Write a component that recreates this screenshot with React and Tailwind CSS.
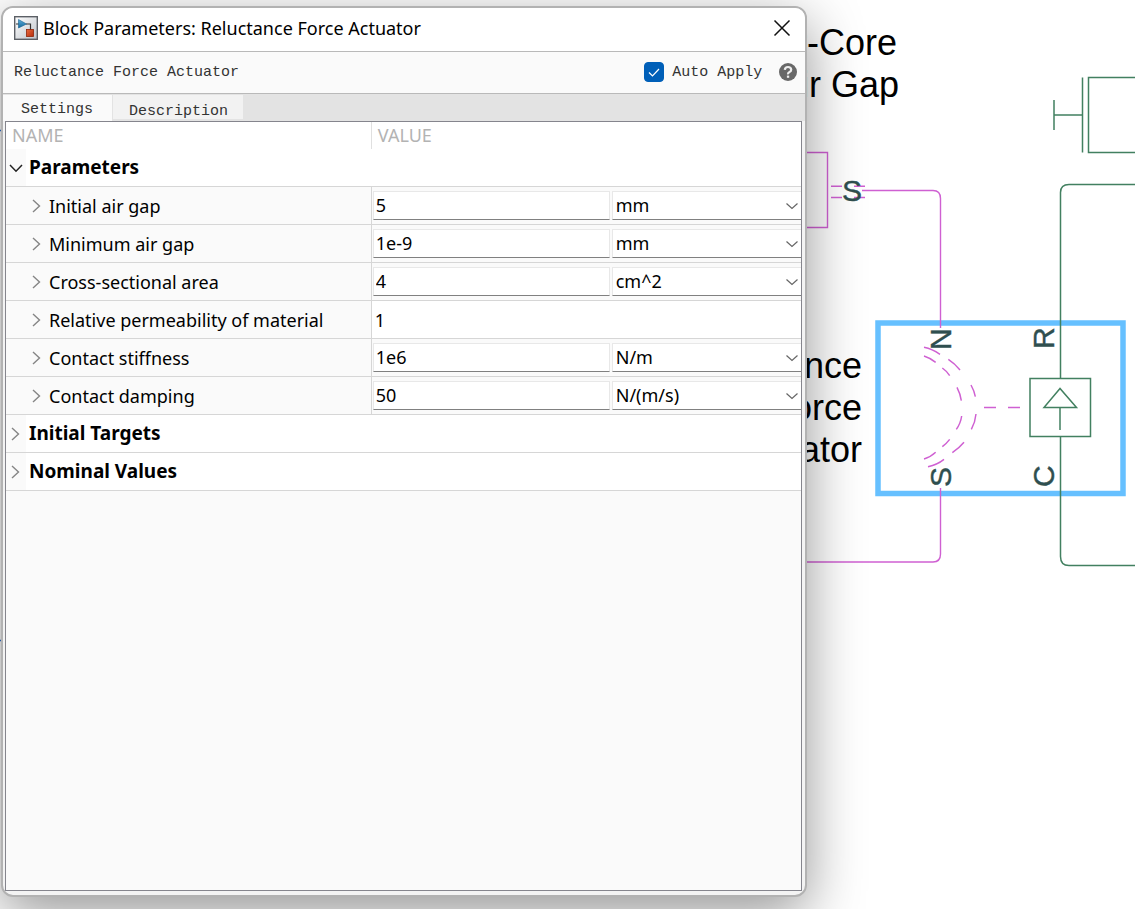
import React, { useState } from "react";

const UI = "font-['Noto_Sans','Open_Sans',sans-serif]";

const PARAMETERS = [
  { id: "gap", name: "Initial air gap", value: "5", units: ["mm", "cm", "m"] },
  { id: "min", name: "Minimum air gap", value: "1e-9", units: ["mm", "cm", "m"] },
  { id: "area", name: "Cross-sectional area", value: "4", units: ["cm^2", "mm^2", "m^2"] },
  { id: "perm", name: "Relative permeability of material", value: "1" },
  { id: "stiff", name: "Contact stiffness", value: "1e6", units: ["N/m", "N/mm"] },
  { id: "damp", name: "Contact damping", value: "50", units: ["N/(m/s)", "N/(mm/s)"] },
];

function Chevron({ open = false }) {
  return open ? (
    <svg width="14" height="14" viewBox="0 0 14 14" fill="none" stroke="#222" strokeWidth="1.5">
      <path d="M1 4l6 6.2L13 4" />
    </svg>
  ) : (
    <svg width="14" height="14" viewBox="0 0 14 14" fill="none" stroke="#858585" strokeWidth="1.4">
      <path d="M3 1l6.5 6-6.5 6" />
    </svg>
  );
}

function BlockIcon() {
  return (
    <svg width="24" height="24" viewBox="0 0 24 24" aria-hidden="true">
      <defs>
        <linearGradient id="frame" x1="0" y1="0" x2="1" y2="1">
          <stop offset="0" stopColor="#ffffff" />
          <stop offset="1" stopColor="#bfc4ca" />
        </linearGradient>
        <linearGradient id="blue" x1="0" y1="0" x2="0" y2="1">
          <stop offset="0" stopColor="#5fb0dc" />
          <stop offset="1" stopColor="#11669b" />
        </linearGradient>
        <linearGradient id="red" x1="0" y1="0" x2="1" y2="1">
          <stop offset="0" stopColor="#ea6a3e" />
          <stop offset="1" stopColor="#b52e0d" />
        </linearGradient>
      </defs>
      <rect x="0.7" y="0.7" width="22.6" height="22.6" fill="url(#frame)" stroke="#5c6066" strokeWidth="1.4" />
      <path d="M2 8h3M12 8h4.5v6" fill="none" stroke="#333" strokeWidth="1.2" />
      <path d="M4.5 3.5v8.500L12.500 8z" fill="url(#blue)" stroke="#155f8f" strokeWidth="0.6" />
      <rect x="12.5" y="13.500" width="7" height="7" fill="url(#red)" stroke="#8e260c" strokeWidth="0.8" />
    </svg>
  );
}

function Diagram() {
  return (
    <svg className="absolute left-0 top-0" width="1135" height="909" viewBox="0 0 1135 909" fill="none">
      <g stroke="#2f6fd0" strokeWidth="1.5">
        <path d="M0 130.5h6M0 640.5h6" />
      </g>
      <g fontFamily="Liberation Sans, sans-serif" fontSize="36" fill="#000" textAnchor="end">
        <text x="897" y="55">r-Core</text>
        <text x="899" y="97">ir Gap</text>
        <text x="862" y="378">nce</text>
        <text x="862" y="420">orce</text>
        <text x="862" y="462">ator</text>
      </g>
      <rect x="878" y="323" width="245" height="170.5" stroke="#66c0ff" strokeWidth="5.5" />
      <g stroke="#cf60d2" strokeWidth="1.4">
        <path d="M800 152.5h27.5v75H800" />
        <path d="M831 186.2h11M854 186.2h11M831 197.5h11M854 197.5h11" />
        <path d="M862 190.5h71q7.500 0 7.500 8V328" />
        <path d="M940.500 488v66q0 8-7.500 8H800" />
        <path d="M984 407.500h12M1008 407.500h12" />
      </g>
      <g transform="translate(800 300) scale(.33333)" stroke="#cf60d2" strokeWidth="4.400">
        <path d="M372 142Q397 147 420 163M445 178Q464 190 480 210M513 255Q523 273 526 290M528 342Q526 366 514 388M492 427Q477 445 457 458M432 478Q412 494 384 500" />
        <path d="M372 168Q391 174 407 187M427 204Q440 213 449 227M471 262Q481 281 484 302M485 348Q482 370 469 388M449 418Q439 431 427 440M407 457Q391 472 372 477" />
      </g>
      <g stroke="#428060" strokeWidth="1.500">
        <path d="M1054 100v30M1054 115h28M1082.500 77.500v75M1140 77.500h-51.500v75H1140" />
        <path d="M1140 184.500h-71q-8.500 0-8.500 8V378" />
        <path d="M1060.500 436.500v120q0 9 8.500 9H1140" />
        <rect x="1030" y="378.500" width="60.500" height="58" />
        <path d="M1060 388.500l-16 19h32.500zM1060 407.500v22.500" />
      </g>
      <g
        fontFamily="Liberation Sans, sans-serif"
        fontSize="30"
        fill="#2f4f4f"
        stroke="#2f4f4f"
        strokeWidth="0.4"
      >
        <text x="842" y="201">S</text>
        <text transform="translate(951 350) rotate(-90)">N</text>
        <text transform="translate(951 487) rotate(-90)">S</text>
        <text transform="translate(1054 349) rotate(-90)">R</text>
        <text transform="translate(1054 487) rotate(-90)">C</text>
      </g>
    </svg>
  );
}

function GroupRow({ name, open }) {
  return (
    <tr className="h-[38px] bg-white">
      <th colSpan={2} scope="rowgroup" className="border-b border-[#d6d6d6] p-0 text-left font-bold">
        <div className="flex h-[37px] items-center">
          <button
            type="button"
            aria-label={name}
            aria-expanded={!!open}
            className="flex h-full w-5 items-center justify-center bg-[#fafafa]"
          >
            <Chevron open={open} />
          </button>
          <span className="pl-[3px] text-[19px] text-black">{name}</span>
        </div>
      </th>
    </tr>
  );
}

function ParameterRow({ id, name, value, units }) {
  return (
    <tr className="h-[38px] bg-[#fafafa]">
      <td className="border-b border-r border-[#d6d6d6] p-0">
        <div className="flex items-center gap-1 pl-[23px]">
          <button type="button" aria-label={"Expand " + name} className="flex w-4 justify-center">
            <Chevron />
          </button>
          <label htmlFor={id} className="whitespace-nowrap text-lg text-black">
            {name}
          </label>
        </div>
      </td>
      <td className={units ? "border-b border-[#d6d6d6] p-0 pl-px" : "border-b border-[#d6d6d6] bg-white p-0 pl-px"}>
        <div className={units ? "grid grid-cols-[5fr_4fr] gap-0.5" : "grid"}>
          <input
            id={id}
            defaultValue={value}
            className={
              units
                ? "h-[29px] w-full min-w-0 border border-[#e8e8e8] border-b-[#808080] bg-white px-0.5 pb-0.5 text-lg text-black outline-none"
                : "h-[29px] w-full min-w-0 border border-transparent bg-white px-px text-lg text-black outline-none"
            }
          />
          {units && (
            <div className="relative min-w-0">
              <select
                aria-label={name + " unit"}
                className="block h-[29px] w-full appearance-none border border-r-0 border-[#e8e8e8] border-b-[#808080] bg-white px-[3px] pb-0.5 text-lg leading-6 text-black outline-none"
              >
                {units.map((unit) => (
                  <option key={unit}>{unit}</option>
                ))}
              </select>
              <svg
                className="pointer-events-none absolute right-0.5 top-2"
                width="14"
                height="14"
                viewBox="0 0 14 14"
                fill="none"
                stroke="#666"
                strokeWidth="1.2"
              >
                <path d="M1.500 4.500L7 9.500l5.500-5" />
              </svg>
            </div>
          )}
        </div>
      </td>
    </tr>
  );
}

export default function App() {
  const [autoApply, setAutoApply] = useState(true);
  return (
    <main className={"relative flex min-h-screen overflow-hidden bg-white pb-3 pl-px pt-1.5 " + UI}>
      <Diagram />
      <section
        role="dialog"
        aria-labelledby="dialog-title"
        className="relative flex w-[71.1%] flex-col overflow-hidden rounded-xl border-2 border-[#b2b2b2] bg-[#f3f3f3] shadow-[0_16px_56px_rgba(0,0,0,0.42)]"
      >
        <header className="flex h-11 items-center gap-[5px] border-b border-[#b9b9b9] bg-white pl-[11px] pr-3.5">
          <div className="pb-1">
            <BlockIcon />
          </div>
          <h1 id="dialog-title" className="flex-1 pb-1 text-lg text-black">
            Block Parameters: Reluctance Force Actuator
          </h1>
          <button type="button" aria-label="Close" className="pb-1">
            <svg width="18" height="18" viewBox="0 0 18 18" stroke="#111" strokeWidth="1.5">
              <path d="M1.500 1.500l15 15M16.500 1.500l-15 15" />
            </svg>
          </button>
        </header>

        <div className="flex h-[42px] items-center border-b border-[#b9b9b9] bg-[#fafafa] pb-0.5 pl-[11px] pr-2 font-['Liberation_Mono',monospace] text-[15px] text-[#333]">
          <span className="flex-1 pt-1">Reluctance Force Actuator</span>
          <label className="flex items-center gap-2">
            <span className="relative flex">
              <input
                type="checkbox"
                checked={autoApply}
                onChange={(e) => setAutoApply(e.target.checked)}
                className="size-5 appearance-none rounded border border-[#005fb8] bg-white checked:bg-[#005fb8]"
              />
              <svg
                className="pointer-events-none absolute left-0 top-0"
                width="20"
                height="20"
                viewBox="0 0 20 20"
                fill="none"
                stroke="#fff"
                strokeWidth="1.200"
              >
                <path d="M5 10.500l3.500 3.500L15 7" />
              </svg>
            </span>
            <span className="pt-1">Auto Apply</span>
          </label>
          <button type="button" aria-label="Help" className="ml-[17px]">
            <svg width="18" height="18" viewBox="0 0 18 18">
              <circle cx="9" cy="9" r="9" fill="#686868" />
              <path
                d="M5.800 6.800Q6 4 9 4t3.200 2.700Q12.200 8.200 10.500 9T9 11.300"
                fill="none"
                stroke="#eee"
                strokeWidth="2.200"
              />
              <rect x="7.900" y="12.600" width="2.300" height="2.200" fill="#eee" />
            </svg>
          </button>
        </div>

        <div
          role="tablist"
          className="flex h-[27px] items-end bg-[#e3e3e3] font-['Liberation_Mono',monospace] text-[15px] text-[#333]"
        >
          <button
            type="button"
            role="tab"
            aria-selected="true"
            className="h-[26px] bg-[#fafafa] pl-[18px] pr-[19px] pt-1"
          >
            Settings
          </button>
          <button
            type="button"
            role="tab"
            aria-selected="false"
            className="mb-0.5 ml-px h-6 bg-[#f2f2f2] pl-4 pr-[15px] pt-1.5"
          >
            Description
          </button>
        </div>

        <div className="mb-1 ml-0.5 mr-[3px] flex-1 border border-[#85858d] bg-[#fafafa]">
          <table className="w-full table-fixed border-separate border-spacing-0">
            <colgroup>
              <col className="w-[46%]" />
              <col />
            </colgroup>
            <thead>
              <tr className="h-[27px] bg-white text-lg leading-6 text-[#b3b3b3]">
                <th scope="col" className="border-r border-[#e0e0e0] p-0 pb-0.5 pl-1.5 text-left font-normal">
                  NAME
                </th>
                <th scope="col" className="p-0 pb-0.5 pl-1.5 text-left font-normal">
                  VALUE
                </th>
              </tr>
            </thead>
            <tbody>
              <GroupRow name="Parameters" open />
              {PARAMETERS.map((p) => (
                <ParameterRow key={p.id} {...p} />
              ))}
              <GroupRow name="Initial Targets" />
              <GroupRow name="Nominal Values" />
            </tbody>
          </table>
        </div>
      </section>
    </main>
  );
}
